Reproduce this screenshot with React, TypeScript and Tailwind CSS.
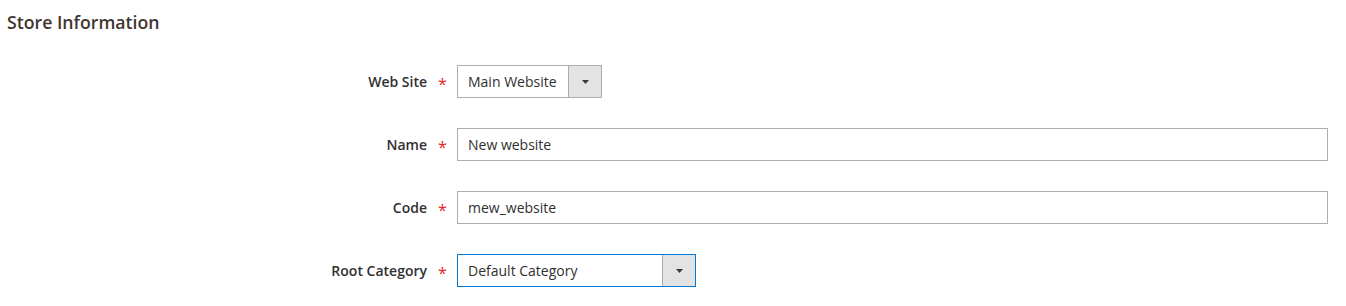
import React from 'react';

function Required() {
  return <span className="w-[30px] pl-[11px] text-[16px] leading-none text-[#e22626] self-center pt-[4px]">*</span>;
}

function Arrow() {
  return (
    <span className="flex h-full w-[33px] items-center justify-center border-l border-[#adadad] bg-[#e3e3e3]">
      <svg width="7" height="4" viewBox="0 0 7 4">
        <path d="M0 0h7L3.5 4z" fill="#41362f" />
      </svg>
    </span>
  );
}

function Row({ label, children }: { label: string; children: React.ReactNode }) {
  return (
    <div className="flex h-[33px] items-center">
      <label className="w-[420px] text-right text-[14px] font-semibold text-[#303030]">{label}</label>
      <Required />
      {children}
    </div>
  );
}

export default function App() {
  return (
    <div className="min-h-screen bg-white px-[7px] pt-[10px] font-['Open_Sans',sans-serif]">
      <h2 className="text-[17.7px] leading-[24px] font-semibold text-[#41362f]">Store Information</h2>
      <div className="mt-[31px] flex flex-col gap-[30px]">
        <Row label="Web Site">
          <div className="flex h-[33px] w-[145px] items-center border border-[#adadad] bg-white">
            <span className="flex-1 pl-[10px] text-[14px] text-[#303030]">Main Website</span>
            <Arrow />
          </div>
        </Row>
        <Row label="Name">
          <div className="flex h-[33px] w-[871px] items-center border border-[#adadad] pl-[10px] text-[14px] text-[#303030]">
            New website
          </div>
        </Row>
        <Row label="Code">
          <div className="flex h-[33px] w-[871px] items-center border border-[#adadad] pl-[10px] text-[14px] text-[#303030]">
            mew_website
          </div>
        </Row>
        <Row label="Root Category">
          <div className="flex h-[33px] w-[239px] items-center border border-[#007bdb] bg-white">
            <span className="flex-1 pl-[10px] text-[14px] text-[#303030]">Default Category</span>
            <Arrow />
          </div>
        </Row>
      </div>
    </div>
  );
}
